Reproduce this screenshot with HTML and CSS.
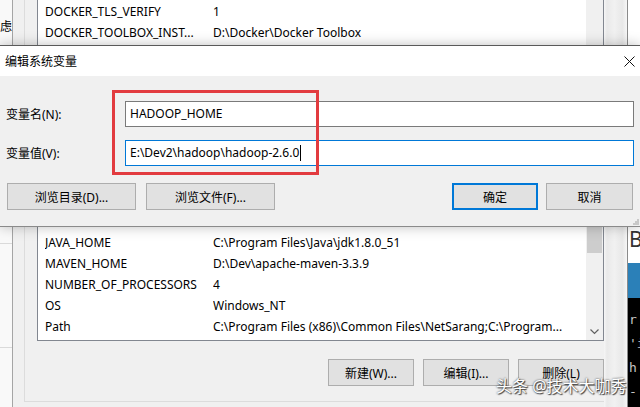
FILE: index.html
```html
<!DOCTYPE html>
<html lang="zh-CN">
<head>
  <meta charset="UTF-8">
  <title>编辑系统变量</title>
  <link rel="stylesheet" href="styles.css">
</head>
<body>
<div class="desk">
  <!-- 左侧被遮住的窗格 -->
  <div class="side">
    <div class="side-top">虑</div>
    <div class="side-mid"></div>
  </div>

  <!-- 环境变量窗口（背景） -->
  <div class="win">
    <div class="group">
      <div class="list">
        <div class="rows">
          <div class="row"><span>DOCKER_TLS_VERIFY</span><span>1</span></div>
          <div class="row"><span>DOCKER_TOOLBOX_INST...</span><span>D:\Docker\Docker Toolbox</span></div>
          <!-- 被对话框挡住的 9 行 -->
          <div class="row-gap"></div>
          <div class="row"><span>JAVA_HOME</span><span>C:\Program Files\Java\jdk1.8.0_51</span></div>
          <div class="row"><span>MAVEN_HOME</span><span>D:\Dev\apache-maven-3.3.9</span></div>
          <div class="row"><span>NUMBER_OF_PROCESSORS</span><span>4</span></div>
          <div class="row"><span>OS</span><span>Windows_NT</span></div>
          <div class="row"><span>Path</span><span>C:\Program Files (x86)\Common Files\NetSarang;C:\Program...</span></div>
        </div>
        <div class="vscroll">
          <div class="thumb"></div>
          <div class="arrow">
            <svg width="9" height="6" viewBox="0 0 9 6"><polyline points="0.5,0.5 4.5,4.5 8.5,0.5" fill="none" stroke="#606060" stroke-width="1.2"/></svg>
          </div>
        </div>
      </div>
      <div class="actions">
        <button class="btn">新建(W)...</button>
        <button class="btn">编辑(I)...</button>
        <button class="btn">删除(L)</button>
      </div>
    </div>
    <div class="edge"></div>
  </div>

  <!-- 右边露出的终端窗口 -->
  <div class="term">
    <div class="term-head">B</div>
    <div class="term-bar"></div>
    <div class="term-body">r
'i
h
-
h</div>
  </div>

  <!-- 编辑系统变量 对话框 -->
  <div class="dialog">
    <div class="title">
      <span>编辑系统变量</span>
      <svg width="11" height="11" viewBox="0 0 11 11"><path d="M0.5 0.5 L10.5 10.5 M10.5 0.5 L0.5 10.5" stroke="#111" stroke-width="1"/></svg>
    </div>
    <div class="body">
      <div class="fields">
        <label>变量名(N):</label>
        <div class="input">HADOOP_HOME</div>
        <label>变量值(V):</label>
        <div class="input focus">E:\Dev2\hadoop\hadoop-2.6.0<span class="caret"></span></div>
      </div>
      <div class="buttons">
        <div class="left">
          <button class="btn wide">浏览目录(D)...</button>
          <button class="btn wide">浏览文件(F)...</button>
        </div>
        <div class="right">
          <button class="btn default">确定</button>
          <button class="btn cancel">取消</button>
        </div>
      </div>
    </div>
    <svg class="grip" width="6" height="6" viewBox="0 0 6 6"><rect x="4" y="0" width="2" height="2" fill="#c8c8c8"/><rect x="2" y="2" width="2" height="2" fill="#c8c8c8"/><rect x="4" y="2" width="2" height="2" fill="#c8c8c8"/><rect x="0" y="4" width="2" height="2" fill="#c8c8c8"/><rect x="2" y="4" width="2" height="2" fill="#c8c8c8"/><rect x="4" y="4" width="2" height="2" fill="#c8c8c8"/></svg>
  </div>

  <!-- 红框标注 -->
  <div class="mark"></div>

  <div class="watermark">头条 @技术大咖秀</div>
</div>
</body>
</html>
```

FILE: styles.css
```css
* {
  margin: 0;
  padding: 0;
  box-sizing: border-box;
}

body {
  font-family: "Noto Sans", "Noto Sans CJK SC", sans-serif;
  font-size: 12px;
  color: #000;
  background: #f0f0f0;
}

.desk {
  position: relative;
  width: 640px;
  height: 407px;
  overflow: hidden;
  display: flex;
  background: #f0f0f0;
}

/* 左侧窗格 */
.side {
  width: 13px;
  flex-shrink: 0;
  background: #f9f9f9;
  border-right: 1px solid #a5a5a5;
  overflow: hidden;
}

.side-top {
  height: 244px;
  padding-top: 19px;
  line-height: 16px;
  border-bottom: 1px solid #dadada;
}

.side-mid {
  height: 104px;
  border-bottom: 1px solid #dadada;
}

/* 背景窗口 */
.win {
  width: 615px;
  flex-shrink: 0;
  display: flex;
}

.group {
  width: 580px;
  height: 402px;
  margin-left: 11px;
  padding-left: 12px;
  border-left: 1px solid #dcdcdc;
  border-bottom: 1px solid #dcdcdc;
}

.list {
  height: 341px;
  display: flex;
  background: #fff;
  border-left: 1px solid #828790;
  border-right: 1px solid #828790;
  border-bottom: 1px solid #828790;
}

.rows {
  flex: 1;
  padding-top: 1px;
  overflow: hidden;
}

.row {
  display: grid;
  grid-template-columns: 168px 1fr;
  height: 21px;
  line-height: 21px;
  padding-left: 7px;
  white-space: nowrap;
}

.row span {
  overflow: hidden;
}

.row-gap {
  height: 189px;
}

.vscroll {
  width: 17px;
  display: flex;
  flex-direction: column;
  background: #f0f0f0;
}

.thumb {
  height: 103px;
  margin: 150px 1px 0;
  background: #cdcdcd;
}

.arrow {
  height: 17px;
  margin-top: auto;
  display: flex;
  align-items: center;
  justify-content: center;
}

.actions {
  display: flex;
  justify-content: flex-end;
  gap: 9px;
  margin-top: 18px;
}

.btn {
  width: 86px;
  height: 27px;
  font: inherit;
  color: #000;
  background: #e1e1e1;
  border: 1px solid #adadad;
}

.edge {
  width: 24px;
  background: linear-gradient(to right, #f6f6f6, #e9e9e9 3px, #f1f1f1 45%, #e8e8e8 80%, #f6f6f6);
  border-right: 1px solid #8a8a8a;
}

/* 终端窗口 */
.term {
  width: 12px;
  flex-shrink: 0;
  display: flex;
  flex-direction: column;
  background: #000;
  overflow: hidden;
}

.term-head {
  height: 263px;
  flex-shrink: 0;
  padding: 227px 0 0 1px;
  background: #fff;
  font-size: 21px;
  line-height: 24px;
  color: #333;
}

.term-bar {
  height: 35px;
  flex-shrink: 0;
  background: #2b80b8;
}

.term-body {
  flex-shrink: 0;
  padding: 10px 0 0 1px;
  font-family: "DejaVu Sans Mono", monospace;
  font-size: 13px;
  line-height: 24px;
  color: #c4c4c4;
  white-space: pre;
}

/* 对话框 */
.dialog {
  position: absolute;
  left: 0;
  top: 45px;
  width: 640px;
  height: 182px;
  background: #f0f0f0;
  border-top: 1px solid #5a5a5a;
  border-bottom: 1px solid #8a8a8a;
  box-shadow: 0 0 12px rgba(0, 0, 0, 0.25);
}

.title {
  height: 30px;
  display: flex;
  align-items: center;
  justify-content: space-between;
  padding: 0 5px;
  background: #fff;
}

.body {
  height: 150px;
  padding: 25px 6px 0;
}

.fields {
  display: grid;
  grid-template-columns: 119px 1fr;
  row-gap: 13px;
  align-items: center;
}

.input {
  height: 26px;
  line-height: 24px;
  padding-left: 4px;
  background: #fff;
  border: 1px solid #7a7a7a;
  white-space: nowrap;
}

.input.focus {
  border-color: #0078d7;
}

.caret {
  display: inline-block;
  width: 1px;
  height: 16px;
  margin-left: 1px;
  vertical-align: -4px;
  background: #000;
}

.buttons {
  display: flex;
  justify-content: space-between;
  margin-top: 17px;
  padding: 0 1px;
}

.left {
  display: flex;
  gap: 10px;
}

.right {
  display: flex;
  gap: 8px;
}

.btn.wide {
  width: 129px;
}

.btn.default {
  border: 2px solid #0078d7;
}

.btn.cancel {
  width: 87px;
}

.grip {
  position: absolute;
  right: 1px;
  bottom: 1px;
}

/* 红框 */
.mark {
  position: absolute;
  left: 112px;
  top: 90px;
  width: 207px;
  height: 85px;
  border: 3px solid #e23b3f;
}

.watermark {
  position: absolute;
  left: 496px;
  top: 375px;
  font-size: 16px;
  line-height: 22px;
  color: #fff;
  white-space: nowrap;
  text-shadow: 0 0 2px #333, 1px 1px 1px #444;
}
```
